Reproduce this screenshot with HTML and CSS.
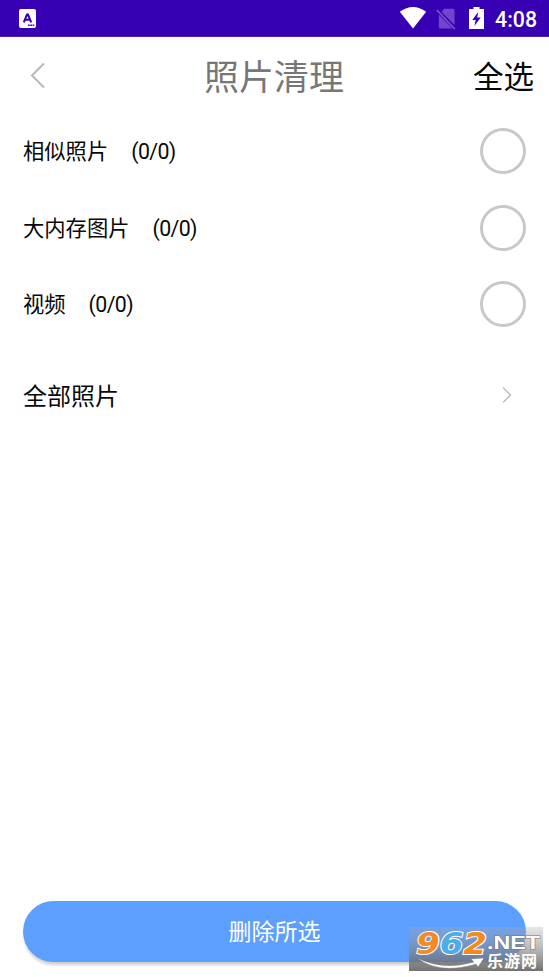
FILE: index.html
```html
<!DOCTYPE html>
<html lang="zh-CN">
<head>
<meta charset="utf-8">
<title>照片清理</title>
<link rel="stylesheet" href="styles.css">
</head>
<body>
<div class="screen">
  <div class="status">
    <svg class="app-icon" width="17" height="19" viewBox="0 0 17 19"><rect width="17" height="19" rx="2" fill="#fff"/><path d="M4.800 13.300 8 5.500h1L12.200 13.300M6 10.700h5" fill="none" stroke="#3700b3" stroke-width="2"/><path d="M9 16.300h6.500" stroke="#3700b3" stroke-width="1.500" stroke-dasharray="1.700 .6"/></svg>
    <div class="indicators">
      <svg class="wifi" width="28" height="22" viewBox="0 0 28 22"><path d="M.8 4.700Q14-4.700 27.200 4.700L14 21.500Z" fill="#fff"/></svg>
      <svg class="sim" width="20" height="22" viewBox="0 0 20 22"><path d="M8 .8h9q1.500 0 1.500 1.500V17L5.500 4ZM2.800 6.500 16.500 20.500H4.300q-1.500 0-1.500-1.500Z" fill="#7344cb"/><path d="m.8 2 18 19" stroke="#7e52d0" stroke-width="1.700"/></svg>
      <svg class="battery" width="15" height="22" viewBox="0 0 15 22"><path d="M4.500 0h6v2H15v20H0V2h4.500Z" fill="#fff"/><path d="M9.300 4.800 3.300 13h3.400L5.400 19l6.300-8.500H8.200Z" fill="#3700b3"/></svg>
      <span class="clock">4:08</span>
    </div>
  </div>
  <header class="header">
    <svg class="back" width="16" height="27" viewBox="0 0 16 27"><path d="M14 1.500 2 13.500 14 25.500" fill="none" stroke="#b8b8b8" stroke-width="2"/></svg>
    <h1 class="title">照片清理</h1>
    <span class="select-all">全选</span>
  </header>
  <main class="list">
    <div class="row"><span class="name">相似照片</span><span class="count">(0/0)</span><span class="radio"></span></div>
    <div class="row"><span class="name">大内存图片</span><span class="count">(0/0)</span><span class="radio"></span></div>
    <div class="row"><span class="name">视频</span><span class="count">(0/0)</span><span class="radio"></span></div>
    <div class="row all"><span class="all-label">全部照片</span><svg class="next" width="12" height="18" viewBox="0 0 12 18"><path d="m2 1.500 7.500 7.500L2 16.500" fill="none" stroke="#bcbcbc" stroke-width="1.500"/></svg></div>
  </main>
  <div class="delete">删除所选</div>
  <svg class="watermark" width="134" height="44" viewBox="0 0 134 44">
    <defs>
      <linearGradient id="shade" x1="0" y1="0" x2="0" y2="1"><stop offset="0" stop-color="#aaa" stop-opacity=".3"/><stop offset="1" stop-color="#5c5c5c" stop-opacity=".87"/></linearGradient>
    </defs>
    <rect width="134" height="44" fill="url(#shade)"/>
    <text class="digits" x="7" y="26.500" textLength="71" lengthAdjust="spacingAndGlyphs">9<tspan class="blue">6</tspan>2</text>
    <path d="M8 31Q34 44 65 35L62 32 75 31 69 40 67 37Q31 48 8 31Z" fill="#fff" stroke="#777" stroke-width=".4"/>
    <text class="net" x="78" y="22" textLength="53" lengthAdjust="spacingAndGlyphs">.NET</text>
    <text class="site" x="78" y="40" textLength="50">乐游网</text>
  </svg>
</div>
</body>
</html>
```

FILE: styles.css
```css
* { box-sizing: border-box; }
body { margin: 0; background: #fff; color: #080808; font-family: Roboto, "Noto Sans CJK SC", sans-serif; }
.screen { position: relative; display: flex; flex-direction: column; height: 977px; overflow: hidden; }
.status { display: flex; justify-content: space-between; height: 37px; padding: 0 12px 0 19px; background: #3700b3; border-bottom: 1px solid #4b20b2; }
.app-icon { margin-top: 9px; }
.indicators { display: flex; align-items: flex-start; padding-top: 7px; }
.sim { margin: 1px 0 0 9px; }
.battery { margin-left: 13px; }
.clock { margin-left: 11px; color: #fff; font-size: 21.3px; font-weight: 500; line-height: 25px; }
.header { display: grid; grid-template-columns: 80px 1fr 80px; align-items: center; height: 76px; padding: 0 15px 0 0; }
.back { margin-left: 30px; }
.title { margin: 0; padding: 7px 0 0 14px; color: #777; font-size: 35px; font-weight: 400; line-height: 50px; text-align: center; }
.select-all { justify-self: end; padding-top: 6px; font-size: 30.5px; line-height: 44px; white-space: nowrap; }
.list { display: flex; flex-direction: column; padding: 0 23px; }
.row { display: flex; align-items: center; height: 76.4px; font-size: 21.3px; line-height: 30px; }
.name { padding-top: 2px; }
.count { margin-left: 23px; padding-top: 2px; letter-spacing: -.6px; }
.radio { width: 46px; height: 46px; margin-left: auto; border: 3px solid #c8c8c8; border-radius: 50%; }
.all { height: 106px; font-size: 24px; }
.all-label { padding-top: 4px; }
.next { margin: 0 13px 0 auto; }
.delete { display: flex; align-items: center; justify-content: center; height: 61px; margin: auto 23px 15px; padding-bottom: 3px; border-radius: 31px; background: #5c9fff; color: #fff; font-size: 23px; box-shadow: 0 4px 3px -1px #cfcfcf; }
.watermark { position: absolute; right: 6px; bottom: 6px; }
.digits { fill: #f58a24; stroke: #fff; stroke-width: 2px; paint-order: stroke; font: italic 700 30px "DejaVu Sans", sans-serif; }
.blue { fill: #4caee8; }
.net { fill: #fff; stroke: #777; stroke-width: 1px; paint-order: stroke; font: 700 18px "Liberation Sans", sans-serif; }
.site { fill: #fff; font: 700 16px "Noto Sans CJK SC", sans-serif; }
```
